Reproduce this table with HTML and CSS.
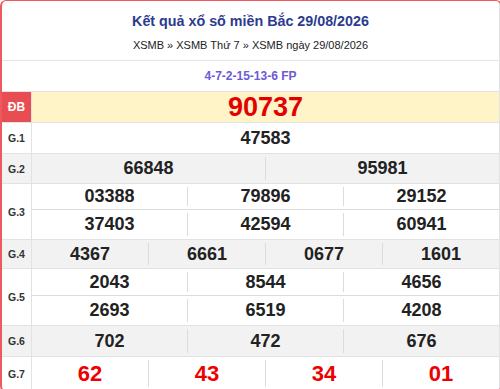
FILE: index.html
```html
<!DOCTYPE html>
<html lang="vi">
<head>
<meta charset="utf-8">
<link rel="stylesheet" href="styles.css">
</head>
<body>
<div class="box">
  <div class="head">
    <h1 class="title">Kết quả xổ số miền Bắc 29/08/2026</h1>
    <div class="crumbs">XSMB » XSMB Thứ 7 » XSMB ngày 29/08/2026</div>
  </div>
  <div class="code">4-7-2-15-13-6 FP</div>
  <div class="row db">
    <div class="lbl">ĐB</div>
    <div class="vals"><div class="line h30"><span class="num big">90737</span></div></div>
  </div>
  <div class="row">
    <div class="lbl">G.1</div>
    <div class="vals"><div class="line h30"><span class="num">47583</span></div></div>
  </div>
  <div class="row alt">
    <div class="lbl">G.2</div>
    <div class="vals"><div class="line h29"><span class="num">66848</span><span class="num">95981</span></div></div>
  </div>
  <div class="row">
    <div class="lbl">G.3</div>
    <div class="vals">
      <div class="line h25 sep"><span class="num">03388</span><span class="num">79896</span><span class="num">29152</span></div>
      <div class="line h29"><span class="num">37403</span><span class="num">42594</span><span class="num">60941</span></div>
    </div>
  </div>
  <div class="row alt">
    <div class="lbl">G.4</div>
    <div class="vals"><div class="line h28"><span class="num">4367</span><span class="num">6661</span><span class="num">0677</span><span class="num">1601</span></div></div>
  </div>
  <div class="row">
    <div class="lbl">G.5</div>
    <div class="vals">
      <div class="line h26 sep"><span class="num">2043</span><span class="num">8544</span><span class="num">4656</span></div>
      <div class="line h29"><span class="num">2693</span><span class="num">6519</span><span class="num">4208</span></div>
    </div>
  </div>
  <div class="row alt">
    <div class="lbl">G.6</div>
    <div class="vals"><div class="line h30"><span class="num">702</span><span class="num">472</span><span class="num">676</span></div></div>
  </div>
  <div class="row last">
    <div class="lbl">G.7</div>
    <div class="vals"><div class="line h33"><span class="num red">62</span><span class="num red">43</span><span class="num red">34</span><span class="num red">01</span></div></div>
  </div>
</div>
</body>
</html>
```

FILE: styles.css
```css
html, body {
  margin: 0;
  padding: 0;
  background: #fff;
  overflow: hidden;
}
body {
  font-family: "Liberation Sans", Arial, sans-serif;
  color: #222;
  width: 500px;
  height: 389px;
}
.box {
  width: 498px;
  border: 2px solid #ec5a5f;
  border-top-width: 1px;
  border-radius: 6px;
  overflow: hidden;
}
.head {
  height: 59px;
  border-right: 1px solid #e2e2e2;
  border-bottom: 1px solid #e6e6e6;
  display: flex;
  flex-direction: column;
  align-items: center;
}
.title {
  margin: 11px 0 0;
  font-size: 14.3px;
  line-height: 18px;
  font-weight: bold;
  color: #2b3b8e;
}
.crumbs {
  margin-top: 8px;
  font-size: 11px;
  line-height: 14px;
  color: #222;
}
.code {
  height: 30px;
  line-height: 30px;
  text-align: center;
  font-size: 12px;
  font-weight: bold;
  color: #6c5ad6;
  border-right: 1px solid #e2e2e2;
  border-bottom: 1px solid #e2e2e2;
}
.row {
  display: flex;
  border-bottom: 1px solid #e2e2e2;
  border-right: 1px solid #e2e2e2;
}
.row.last { border-bottom: 0; }
.row.alt { background: #f2f2f2; }
.lbl {
  width: 29px;
  flex: none;
  border-right: 1px solid #e2e2e2;
  display: flex;
  align-items: center;
  justify-content: center;
  font-size: 10.5px;
  font-weight: bold;
  color: #333;
}
.db .lbl {
  background: #e84d51;
  color: #fff;
  font-size: 12px;
}
.db .vals { background: #fff4c8; }
.vals {
  flex: 1;
  display: flex;
  flex-direction: column;
}
.line {
  display: flex;
  align-items: stretch;
}
.line.sep { border-bottom: 1px solid #dcdcdc; }
.h25 { height: 25px; }
.h26 { height: 26px; }
.h28 { height: 28px; }
.h29 { height: 29px; }
.h30 { height: 30px; }
.h33 { height: 33px; }
.num {
  flex: 1;
  display: flex;
  align-items: center;
  justify-content: center;
  font-size: 18px;
  font-weight: bold;
  color: #222;
  margin: 3px 0;
}
.num + .num { border-left: 1px solid #dcdcdc; }
.num.big {
  font-size: 27px;
  color: #e50000;
  margin: 0;
}
.num.red {
  font-size: 22px;
  color: #ee0000;
}
```
